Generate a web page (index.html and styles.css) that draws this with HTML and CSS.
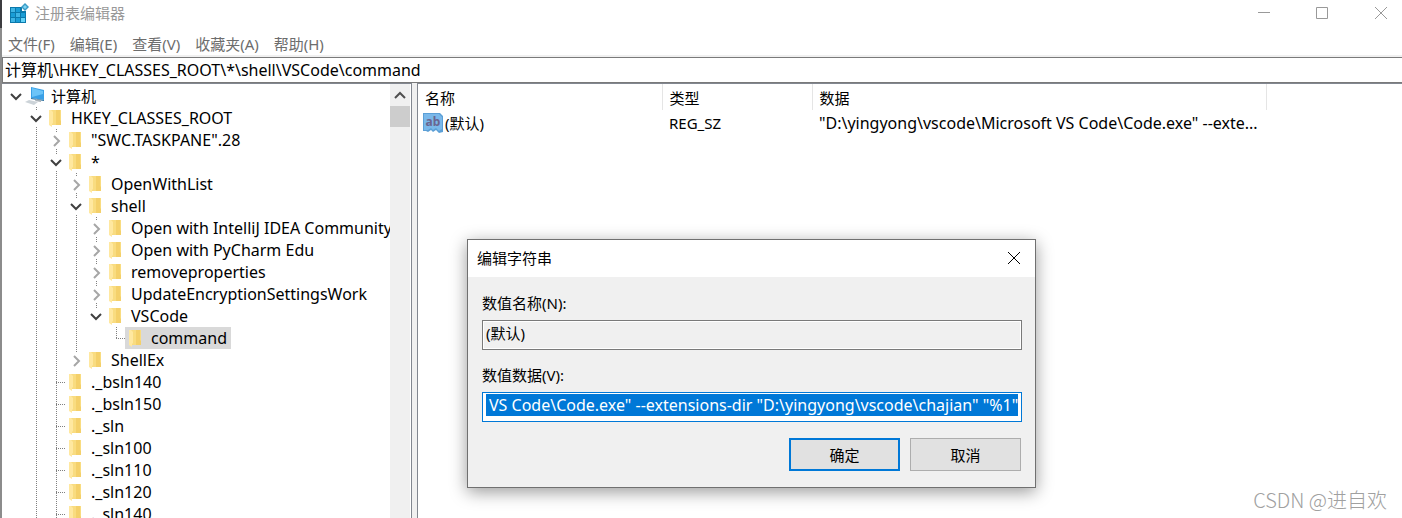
FILE: index.html
```
<!DOCTYPE html>
<html lang="zh-CN">

<head>
  <meta charset="UTF-8" />
  <meta name="viewport" content="width=device-width, initial-scale=1.0" />
  <title>注册表编辑器</title>
  <link rel="stylesheet" href="styles.css">
</head>

<body>
  <svg class="defs" width="0" height="0" aria-hidden="true">
    <symbol id="folder" viewBox="0 0 12 17">
      <path d="M2 0h10v15H3z" fill="#f9dc80" />
      <path d="M7 0h4v10l1 1v4H7z" fill="#f4d06a" />
      <path d="M0 0h2l2 2v11l-1 1v3L0 15z" fill="#ffe8a0" />
    </symbol>
    <symbol id="chevron-down" viewBox="0 0 20 16">
      <path d="M6 6l5 5 5-5" fill="none" stroke="#404040" stroke-width="2" />
    </symbol>
    <symbol id="chevron-right" viewBox="0 0 20 16">
      <path d="M9 4l5 5-5 5" fill="none" stroke="#a6a6a6" stroke-width="2" />
    </symbol>
  </svg>

  <div class="window">
    <header class="titlebar">
      <svg class="app-icon" width="21" height="20" viewBox="0 0 21 20" aria-hidden="true">
        <path d="M1 4h12v4h4v12H1z" fill="#0b79ac" />
        <path d="M2 5h4v4H2zM7 10h4v4H7zM2 15h4v4H2z" fill="#3fb4e4" />
        <path d="M7 5h4v4H7zM2 10h4v4H2zM12 10h4v4h-4zM7 15h4v4H7z" fill="#1a9dd6" />
        <path d="M12 15h4v4h-4z" fill="#62d2f7" />
        <path d="M16 0l4 4-4 4-4-4z" fill="#3a9cc6" />
        <path d="M16 2l2 2-2 2-2-2z" fill="#7fd4f3" />
      </svg>
      <h1>注册表编辑器</h1>
      <div class="window-buttons">
        <button type="button" aria-label="最小化">
          <svg width="12" height="12" viewBox="0 0 12 12"><path d="M0 5.500h12" /></svg>
        </button>
        <button type="button" aria-label="最大化">
          <svg width="12" height="12" viewBox="0 0 12 12"><path d="M.5.5h11v11H.5z" /></svg>
        </button>
        <button type="button" aria-label="关闭">
          <svg width="12" height="12" viewBox="0 0 12 12"><path d="M0 0l12 12M12 0L0 12" /></svg>
        </button>
      </div>
    </header>

    <nav class="menubar">
      <button type="button">文件(F)</button>
      <button type="button">编辑(E)</button>
      <button type="button">查看(V)</button>
      <button type="button">收藏夹(A)</button>
      <button type="button">帮助(H)</button>
    </nav>

    <input class="address" type="text" aria-label="地址" value="计算机\HKEY_CLASSES_ROOT\*\shell\VSCode\command" />

    <main class="panes">
      <section class="tree-pane">
        <ul class="tree">
          <li class="root">
            <div class="row">
              <button type="button" class="toggle" aria-label="折叠"><svg><use href="#chevron-down" /></svg></button>
              <span class="item">
                <svg class="computer" width="20" height="18" viewBox="0 0 20 18" aria-hidden="true">
                  <path d="M6 0l13 3v10L6 11z" fill="#3aa0e6" />
                  <path d="M7 1l11 3v3L7 10z" fill="#6cc4f8" />
                  <path d="M19 3v10L6 11v1l13 2z" fill="#2a6f9f" />
                  <path d="M11 12l5 1v2l-6-1z" fill="#a8b0b6" />
                  <path d="M0 15l4-2 9 2-4 3z" fill="#ccd3d8" />
                </svg>
                <span class="label root-label">计算机</span>
              </span>
            </div>
            <ul>
              <li class="more">
                <div class="row">
                  <button type="button" class="toggle" aria-label="折叠"><svg><use href="#chevron-down" /></svg></button>
                  <span class="item"><svg class="folder"><use href="#folder" /></svg><span class="label">HKEY_CLASSES_ROOT</span></span>
                </div>
                <ul>
                  <li>
                    <div class="row">
                      <button type="button" class="toggle" aria-label="展开"><svg><use href="#chevron-right" /></svg></button>
                      <span class="item"><svg class="folder"><use href="#folder" /></svg><span class="label">"SWC.TASKPANE".28</span></span>
                    </div>
                  </li>
                  <li>
                    <div class="row">
                      <button type="button" class="toggle" aria-label="折叠"><svg><use href="#chevron-down" /></svg></button>
                      <span class="item"><svg class="folder"><use href="#folder" /></svg><span class="label">*</span></span>
                    </div>
                    <ul>
                      <li>
                        <div class="row">
                          <button type="button" class="toggle" aria-label="展开"><svg><use href="#chevron-right" /></svg></button>
                          <span class="item"><svg class="folder"><use href="#folder" /></svg><span class="label">OpenWithList</span></span>
                        </div>
                      </li>
                      <li>
                        <div class="row">
                          <button type="button" class="toggle" aria-label="折叠"><svg><use href="#chevron-down" /></svg></button>
                          <span class="item"><svg class="folder"><use href="#folder" /></svg><span class="label">shell</span></span>
                        </div>
                        <ul>
                          <li>
                            <div class="row">
                              <button type="button" class="toggle" aria-label="展开"><svg><use href="#chevron-right" /></svg></button>
                              <span class="item"><svg class="folder"><use href="#folder" /></svg><span class="label">Open with IntelliJ IDEA Community Edition</span></span>
                            </div>
                          </li>
                          <li>
                            <div class="row">
                              <button type="button" class="toggle" aria-label="展开"><svg><use href="#chevron-right" /></svg></button>
                              <span class="item"><svg class="folder"><use href="#folder" /></svg><span class="label">Open with PyCharm Edu</span></span>
                            </div>
                          </li>
                          <li>
                            <div class="row">
                              <button type="button" class="toggle" aria-label="展开"><svg><use href="#chevron-right" /></svg></button>
                              <span class="item"><svg class="folder"><use href="#folder" /></svg><span class="label">removeproperties</span></span>
                            </div>
                          </li>
                          <li>
                            <div class="row">
                              <button type="button" class="toggle" aria-label="展开"><svg><use href="#chevron-right" /></svg></button>
                              <span class="item"><svg class="folder"><use href="#folder" /></svg><span class="label">UpdateEncryptionSettingsWork</span></span>
                            </div>
                          </li>
                          <li>
                            <div class="row">
                              <button type="button" class="toggle" aria-label="折叠"><svg><use href="#chevron-down" /></svg></button>
                              <span class="item"><svg class="folder"><use href="#folder" /></svg><span class="label">VSCode</span></span>
                            </div>
                            <ul>
                              <li>
                                <div class="row">
                                  <span class="branch"></span>
                                  <span class="item selected"><svg class="folder"><use href="#folder" /></svg><span class="label">command</span></span>
                                </div>
                              </li>
                            </ul>
                          </li>
                        </ul>
                      </li>
                      <li>
                        <div class="row">
                          <button type="button" class="toggle" aria-label="展开"><svg><use href="#chevron-right" /></svg></button>
                          <span class="item"><svg class="folder"><use href="#folder" /></svg><span class="label">ShellEx</span></span>
                        </div>
                      </li>
                    </ul>
                  </li>
                  <li>
                    <div class="row"><span class="branch"></span><span class="item"><svg class="folder"><use href="#folder" /></svg><span class="label">._bsln140</span></span></div>
                  </li>
                  <li>
                    <div class="row"><span class="branch"></span><span class="item"><svg class="folder"><use href="#folder" /></svg><span class="label">._bsln150</span></span></div>
                  </li>
                  <li>
                    <div class="row"><span class="branch"></span><span class="item"><svg class="folder"><use href="#folder" /></svg><span class="label">._sln</span></span></div>
                  </li>
                  <li>
                    <div class="row"><span class="branch"></span><span class="item"><svg class="folder"><use href="#folder" /></svg><span class="label">._sln100</span></span></div>
                  </li>
                  <li>
                    <div class="row"><span class="branch"></span><span class="item"><svg class="folder"><use href="#folder" /></svg><span class="label">._sln110</span></span></div>
                  </li>
                  <li>
                    <div class="row"><span class="branch"></span><span class="item"><svg class="folder"><use href="#folder" /></svg><span class="label">._sln120</span></span></div>
                  </li>
                  <li class="more">
                    <div class="row"><span class="branch"></span><span class="item"><svg class="folder"><use href="#folder" /></svg><span class="label">._sln140</span></span></div>
                  </li>
                </ul>
              </li>
            </ul>
          </li>
        </ul>
        <div class="scrollbar">
          <button type="button" aria-label="向上滚动">
            <svg width="12" height="8" viewBox="0 0 12 8"><path d="M1 7l5-5 5 5" /></svg>
          </button>
          <div class="thumb"></div>
        </div>
      </section>

      <section class="values-pane">
        <table>
          <colgroup>
            <col class="col-name" />
            <col class="col-type" />
            <col class="col-data" />
            <col />
          </colgroup>
          <thead>
            <tr>
              <th>名称</th>
              <th>类型</th>
              <th>数据</th>
              <td></td>
            </tr>
          </thead>
          <tbody>
            <tr>
              <td class="name">
                <div class="value-name">
                  <svg width="20" height="20" viewBox="0 0 20 20" aria-hidden="true">
                    <path d="M0 0h17l3 3v16l-4 1-3-3-3 2-2-2-3 2-2-1H0z" fill="#5b9fd6" />
                    <path d="M1 1h15l3 3v12l-3 2-3-3-3 2-2-2-3 2H1z" fill="#7ab8ea" />
                    <text x="10" y="13" text-anchor="middle" class="ab">ab</text>
                  </svg>
                  <span>(默认)</span>
                </div>
              </td>
              <td>REG_SZ</td>
              <td class="data">"D:\yingyong\vscode\Microsoft VS Code\Code.exe" --exte...</td>
              <td></td>
            </tr>
          </tbody>
        </table>
      </section>
    </main>
  </div>

  <div class="dialog" role="dialog" aria-labelledby="dialog-title">
    <div class="dialog-title">
      <h2 id="dialog-title">编辑字符串</h2>
      <button type="button" aria-label="关闭">
        <svg width="12" height="12" viewBox="0 0 12 12"><path d="M0 0l12 12M12 0L0 12" /></svg>
      </button>
    </div>
    <form class="dialog-form">
      <label for="valueName">数值名称(N):</label>
      <input type="text" id="valueName" value="(默认)" readonly />
      <label for="valueData">数值数据(V):</label>
      <input type="text" id="valueData" spellcheck="false"
        value="&quot;D:\yingyong\vscode\Microsoft VS Code\Code.exe&quot; --extensions-dir &quot;D:\yingyong\vscode\chajian&quot; &quot;%1&quot;" />
      <div class="dialog-buttons">
        <button type="submit" class="default">确定</button>
        <button type="button">取消</button>
      </div>
    </form>
  </div>

  <div class="watermark">CSDN @进自欢</div>

  <script>
    const valueData = document.getElementById('valueData');

    valueData.focus();
    valueData.select();
    valueData.scrollLeft = valueData.scrollWidth;

    document.querySelector('.dialog-form').addEventListener('submit', function (e) {
      e.preventDefault();
    });
  </script>
</body>

</html>
```
FILE: styles.css
```
:root {
  --accent: #0078d7;
  --line: #828790;
  --face: #f0f0f0;
}

* {
  box-sizing: border-box;
}

body {
  margin: 0;
  padding-left: 2px;
  height: 100vh;
  overflow: hidden;
  background: linear-gradient(#3c3c40 28px, #8c8c8c 28px);
  color: #000000;
}

body,
button,
input {
  font-family: "Noto Sans", "Noto Sans CJK SC", sans-serif;
  font-size: 15px;
  line-height: 20px;
}

button {
  padding: 0;
  border: none;
  background: none;
}

h1,
h2 {
  margin: 0;
  font-size: 15px;
  font-weight: normal;
}

ul {
  margin: 0;
  padding: 0;
  list-style: none;
}

.defs {
  position: absolute;
}

.window {
  display: flex;
  flex-direction: column;
  height: 100vh;
  background: #ffffff;
}

/* title bar */
.titlebar {
  display: flex;
  align-items: center;
  height: 28px;
  padding: 0 0 2px 7px;
  color: #999999;
}

.titlebar h1 {
  flex: 1;
  margin-left: 5px;
}

.window-buttons {
  display: flex;
}

.window-buttons button {
  display: flex;
  justify-content: center;
  width: 58px;
}

.window-buttons button:last-child {
  width: 51px;
  padding-right: 15px;
  justify-content: flex-end;
}

.window-buttons path {
  fill: none;
  stroke: #999999;
}

/* menu */
.menubar {
  display: flex;
  gap: 15px;
  height: 29px;
  padding: 4px 6px 0;
  align-items: center;
  border-bottom: 2px solid var(--face);
}

.menubar button {
  color: #6d6d6d;
}

.address {
  height: 26px;
  padding: 0 2px 2px;
  border: 1px solid #7a7a7a;
  border-right: none;
  font-size: 16px;
}

/* tree */
.panes {
  display: flex;
  flex: 1;
  min-height: 0;
  background: var(--face);
}

.tree-pane {
  display: flex;
  width: 410px;
  border-top: 1px solid var(--line);
  border-right: 1px solid var(--line);
  background: #ffffff;
}

.tree {
  flex: 1;
  overflow: hidden;
  padding: 1px 0 0 3px;
}

.tree li {
  background: repeating-linear-gradient(#808080 0 1px, transparent 1px 2px) 11px 0 / 1px 100% no-repeat;
}

.tree li:last-child:not(.more) {
  background-size: 1px 11px;
}

.tree li.root:last-child {
  background: none;
}

.tree ul {
  padding-left: 20px;
}

.row {
  display: flex;
  align-items: center;
  height: 22px;
  white-space: nowrap;
}

.toggle {
  flex: none;
  display: flex;
  background: #ffffff;
}

.toggle svg {
  width: 20px;
  height: 16px;
}

.branch {
  flex: none;
  width: 9px;
  height: 1px;
  margin-left: 11px;
  background: repeating-linear-gradient(90deg, #808080 0 1px, transparent 1px 2px);
}

.item {
  display: flex;
  align-items: center;
  height: 22px;
  padding-right: 4px;
}

.selected {
  background: #d9d9d9;
}

.folder {
  width: 12px;
  height: 17px;
  margin: 0 4px;
}

.label {
  padding-left: 6px;
  font-size: 16px;
}

.root-label {
  font-size: 15px;
}

.scrollbar {
  width: 20px;
  margin-right: 1px;
  background: var(--face);
}

.scrollbar button {
  display: flex;
  align-items: center;
  justify-content: center;
  width: 20px;
  height: 22px;
}

.scrollbar path {
  fill: none;
  stroke: #505050;
  stroke-width: 2;
}

.thumb {
  height: 21px;
  background: #cdcdcd;
}

/* values */
.values-pane {
  flex: 1;
  margin-left: 5px;
  border-top: 1px solid var(--line);
  border-left: 1px solid var(--line);
  background: #ffffff;
}

table {
  width: 100%;
  table-layout: fixed;
  border-collapse: collapse;
}

.col-name {
  width: 244px;
}

.col-type {
  width: 150px;
}

.col-data {
  width: 454px;
}

th,
td {
  height: 26px;
  padding: 0 0 0 7px;
  font-weight: normal;
  text-align: left;
  white-space: nowrap;
}

th {
  padding-top: 2px;
  border-right: 1px solid #e5e5e5;
}

.name {
  padding-left: 5px;
}

.data {
  font-size: 16px;
}

.value-name {
  display: flex;
  align-items: center;
  gap: 2px;
}

.ab {
  font-size: 12px;
  font-weight: bold;
  fill: #6a6590;
}

/* edit dialog */
.dialog {
  position: absolute;
  top: 239px;
  left: 467px;
  width: 569px;
  border: 1px solid #707070;
  background: var(--face);
  box-shadow: 0 4px 16px rgba(0, 0, 0, 0.4);
}

.dialog-title {
  display: flex;
  align-items: center;
  justify-content: space-between;
  height: 37px;
  padding: 0 15px 2px 9px;
  background: #ffffff;
}

.dialog-title button {
  display: flex;
}

.dialog-title path {
  stroke: #000000;
}

.dialog-form {
  display: flex;
  flex-direction: column;
  padding: 16px 13px 16px 14px;
}

.dialog-form label {
  margin-bottom: 7px;
}

.dialog-form input {
  height: 30px;
  margin-bottom: 15px;
  padding: 0 3px 5px;
  border: 1px solid #7a7a7a;
  outline: none;
  caret-color: transparent;
}

#valueName {
  background: var(--face);
  box-shadow: inset 0 0 0 1px #ffffff;
}

#valueData {
  border-color: var(--accent);
  font-size: 16px;
}

#valueData::selection {
  background: var(--accent);
  color: #ffffff;
}

.dialog-buttons {
  display: flex;
  justify-content: flex-end;
  gap: 10px;
  padding: 1px 1px 0 0;
}

.dialog-buttons button {
  width: 111px;
  height: 33px;
  border: 1px solid #adadad;
  background: #e1e1e1;
}

.dialog-buttons .default {
  border: 2px solid var(--accent);
}

.watermark {
  position: absolute;
  right: 15px;
  bottom: 6px;
  color: #a0a0a0;
  font-family: "Noto Sans CJK SC", sans-serif;
  font-size: 20px;
  font-weight: 300;
  line-height: 24px;
}
```
